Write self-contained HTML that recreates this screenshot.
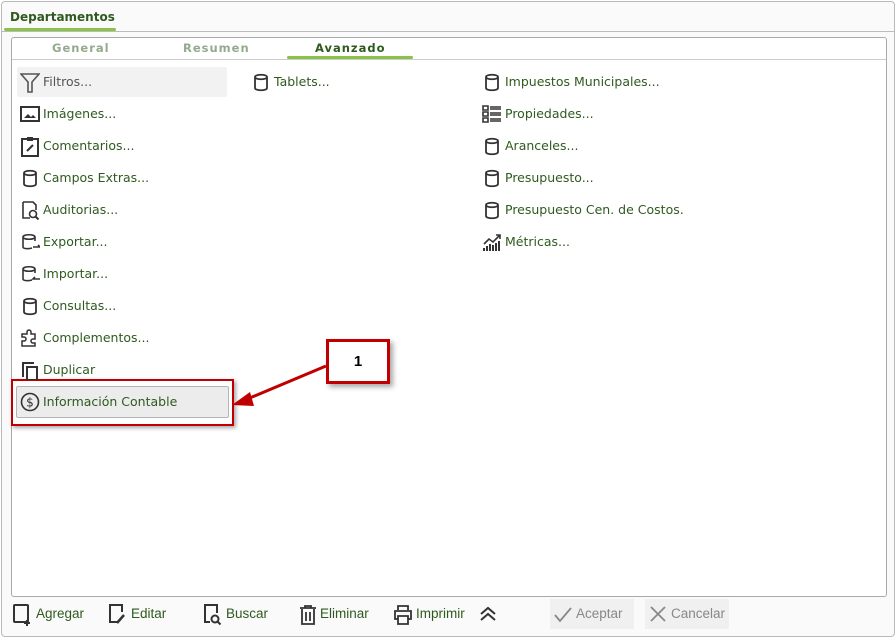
<!DOCTYPE html><html><head><style>
body{margin:0;width:896px;height:638px;background:#fff;font-family:"DejaVu Sans",Verdana,sans-serif;position:relative;overflow:hidden}
.frame{position:absolute;left:1px;top:1px;width:892px;height:634px;border:1px solid #b9b9b9;border-radius:4px;background:#fafafa}
.abs{position:absolute}
.it{position:absolute;font-size:12.5px;color:#2f5a1e;height:20px;line-height:20px;white-space:nowrap}
.it svg{position:absolute;left:-23px;top:0}
.tb{position:absolute;top:604px;font-family:"Liberation Sans Narrow","Liberation Sans",sans-serif;font-size:13.5px;color:#2f5a1e;line-height:20px}
</style></head><body>
<div class="frame"></div>
<div class="abs" style="left:10px;top:10px;font-size:12px;font-weight:bold;color:#2f5a1e">Departamentos</div>
<div class="abs" style="left:4px;top:28px;width:112px;height:3px;background:#8bc34a;border-radius:2px"></div>
<div class="abs" style="left:2px;top:31px;width:892px;height:1px;background:#bbb"></div>
<div class="abs" style="left:11px;top:37px;width:874px;height:558px;border:1px solid #aaa;border-radius:3px;background:#fff"></div>
<div class="abs" style="left:52px;top:41px;font-size:11.5px;font-weight:bold;color:#93ab8c;letter-spacing:1px">General</div>
<div class="abs" style="left:183px;top:41px;font-size:11.5px;font-weight:bold;color:#93ab8c;letter-spacing:1px">Resumen</div>
<div class="abs" style="left:315px;top:41px;font-size:11.5px;font-weight:bold;color:#2f5a1e;letter-spacing:1px">Avanzado</div>
<div class="abs" style="left:287px;top:56px;width:126px;height:3px;background:#8bc34a;border-radius:2px"></div>
<div class="abs" style="left:12px;top:59px;width:874px;height:1px;background:#ccc"></div>
<div class="abs" style="left:17px;top:67px;width:210px;height:30px;background:#f2f2f2;border-radius:2px"></div>
<div class="abs" style="left:16px;top:386px;width:211px;height:30px;background:#ececec;border:1px solid #b5b5b5;border-radius:2px"></div>
<div class="abs" style="left:11px;top:379px;width:219px;height:43px;border:2px solid #c00000;box-shadow:2px 2px 4px rgba(0,0,0,.35)"></div>
<div class="abs" style="left:326px;top:339px;width:58px;height:39px;border:3px solid #c00000;background:#fff;box-shadow:3px 3px 5px rgba(0,0,0,.35);font:bold 15px 'Liberation Sans',sans-serif;text-align:center;line-height:40px">1</div>
<svg class="abs" style="left:0;top:0" width="896" height="638"><line x1="326" y1="366" x2="245" y2="400" stroke="#c00000" stroke-width="3"/><polygon points="232,405 250,392 254,406" fill="#c00000"/></svg>
<div class="it" style="left:43px;top:72px;color:#555"><svg width="20" height="22" viewBox="0 0 20 22"><path d="M1 2h18l-7 8v10h-4V10z" fill="none" stroke="#555" stroke-width="1.6"/></svg>Filtros...</div>
<div class="it" style="left:43px;top:104px"><svg width="20" height="20"><rect x="1" y="3" width="18" height="14" fill="none" stroke="#333" stroke-width="2"/><path d="M4 14l4-4 3 3 2-2 3 3z" fill="#333"/></svg>Imágenes...</div>
<div class="it" style="left:43px;top:136px"><svg width="20" height="22"><rect x="2" y="3" width="16" height="17" fill="none" stroke="#333" stroke-width="2"/><rect x="7" y="1" width="6" height="4" fill="#333"/><path d="M7 15l6-6" stroke="#333" stroke-width="2"/></svg>Comentarios...</div>
<div class="it" style="left:43px;top:168px"><svg width="20" height="20"><path d="M4 5v11c0 3 12 3 12 0V5c0-3-12-3-12 0c0 3 12 3 12 0" fill="none" stroke="#333" stroke-width="1.8"/></svg>Campos Extras...</div>
<div class="it" style="left:43px;top:200px"><svg width="20" height="20"><path d="M3 2h10l3 3v5M3 2v16h7" fill="none" stroke="#333" stroke-width="1.6"/><circle cx="13" cy="14" r="3.5" fill="none" stroke="#333" stroke-width="1.6"/><path d="M15.5 16.5l3 3" stroke="#333" stroke-width="2"/></svg>Auditorias...</div>
<div class="it" style="left:43px;top:232px"><svg width="20" height="20"><path d="M12 16c-3 1-9 1-9-1V5c0-3 12-3 12 0v4M3 5c0 3 12 3 12 0M13 15h7l-2-2" fill="none" stroke="#333" stroke-width="1.6"/></svg>Exportar...</div>
<div class="it" style="left:43px;top:264px"><svg width="20" height="20"><path d="M12 16c-3 1-9 1-9-1V5c0-3 12-3 12 0v4M3 5c0 3 12 3 12 0M20 15h-7l2-2" fill="none" stroke="#333" stroke-width="1.6"/></svg>Importar...</div>
<div class="it" style="left:43px;top:296px"><svg width="20" height="20"><path d="M4 5v11c0 3 12 3 12 0V5c0-3-12-3-12 0c0 3 12 3 12 0" fill="none" stroke="#333" stroke-width="1.8"/></svg>Consultas...</div>
<div class="it" style="left:43px;top:328px"><svg width="20" height="20"><path d="M2 18v-5h2a2 2 0 000-4H2V6h5V4a2 2 0 014 0v2h4v5h-2a2 2 0 000 4h2v3z" fill="none" stroke="#333" stroke-width="1.5"/></svg>Complementos...</div>
<div class="it" style="left:43px;top:360px"><svg width="20" height="20"><path d="M3 17V3h11" fill="none" stroke="#333" stroke-width="2"/><rect x="7" y="7" width="10" height="13" fill="none" stroke="#333" stroke-width="2"/></svg>Duplicar</div>
<div class="it" style="left:43px;top:392px"><svg width="20" height="20"><circle cx="10" cy="10" r="8.5" fill="none" stroke="#333" stroke-width="1.6"/><text x="10" y="14.5" font-size="12" text-anchor="middle" fill="#333" font-family="DejaVu Sans">$</text></svg>Información Contable</div>
<div class="it" style="left:274px;top:72px"><svg width="20" height="20"><path d="M4 5v11c0 3 12 3 12 0V5c0-3-12-3-12 0c0 3 12 3 12 0" fill="none" stroke="#333" stroke-width="1.8"/></svg>Tablets...</div>
<div class="it" style="left:505px;top:72px"><svg width="20" height="20"><path d="M4 5v11c0 3 12 3 12 0V5c0-3-12-3-12 0c0 3 12 3 12 0" fill="none" stroke="#333" stroke-width="1.8"/></svg>Impuestos Municipales...</div>
<div class="it" style="left:505px;top:104px"><svg width="20" height="20"><path d="M1 2h5v4H1zM8 3h11M8 5h11M1 8h5v4H1zM8 9h11M8 11h11M1 14h5v4H1zM8 15h11M8 17h11" fill="none" stroke="#333" stroke-width="1.6"/></svg>Propiedades...</div>
<div class="it" style="left:505px;top:136px"><svg width="20" height="20"><path d="M4 5v11c0 3 12 3 12 0V5c0-3-12-3-12 0c0 3 12 3 12 0" fill="none" stroke="#333" stroke-width="1.8"/></svg>Aranceles...</div>
<div class="it" style="left:505px;top:168px"><svg width="20" height="20"><path d="M4 5v11c0 3 12 3 12 0V5c0-3-12-3-12 0c0 3 12 3 12 0" fill="none" stroke="#333" stroke-width="1.8"/></svg>Presupuesto...</div>
<div class="it" style="left:505px;top:200px"><svg width="20" height="20"><path d="M4 5v11c0 3 12 3 12 0V5c0-3-12-3-12 0c0 3 12 3 12 0" fill="none" stroke="#333" stroke-width="1.8"/></svg>Presupuesto Cen. de Costos.</div>
<div class="it" style="left:505px;top:232px"><svg width="20" height="20"><path d="M2 19v-3M5 19v-5M8 19v-7M11 19v-6M14 19v-8M17 19v-10" stroke="#333" stroke-width="2"/><path d="M2 12l5-5 4 3 7-7M14 3h4v4" fill="none" stroke="#333" stroke-width="1.6"/></svg>Métricas...</div>
<svg class="abs" style="left:12px;top:603px" width="22" height="24"><rect x="2" y="2" width="14" height="17" rx="1" fill="none" stroke="#333" stroke-width="2"/><path d="M15 17v6M12 20h6" stroke="#333" stroke-width="2"/></svg>
<div class="tb" style="left:36px">Agregar</div>
<svg class="abs" style="left:107px;top:603px" width="22" height="24"><path d="M10 19H3V2h12v7" fill="none" stroke="#333" stroke-width="2"/><path d="M10 20l7-8" stroke="#333" stroke-width="2.5"/></svg>
<div class="tb" style="left:131px">Editar</div>
<svg class="abs" style="left:202px;top:603px" width="22" height="24"><path d="M8 19H3V2h12v8" fill="none" stroke="#333" stroke-width="2"/><circle cx="13" cy="16" r="3.5" fill="none" stroke="#333" stroke-width="2"/><path d="M15.5 18.5l3 3" stroke="#333" stroke-width="2"/></svg>
<div class="tb" style="left:226px">Buscar</div>
<svg class="abs" style="left:297px;top:603px" width="22" height="24"><path d="M3 5h16M8 5V3h6v2M5 6v15h12V6M9 9v9M13 9v9" fill="none" stroke="#333" stroke-width="1.8"/></svg>
<div class="tb" style="left:320px">Eliminar</div>
<svg class="abs" style="left:392px;top:603px" width="22" height="24"><path d="M6 7V3h10v4M6 16H3V8h16v8h-3M6 13h10v8H6z" fill="none" stroke="#333" stroke-width="1.8"/></svg>
<div class="tb" style="left:416px">Imprimir</div>
<svg class="abs" style="left:478px;top:605px" width="20" height="18"><path d="M3 9l7-6 7 6M3 15l7-6 7 6" fill="none" stroke="#333" stroke-width="2"/></svg>
<div class="abs" style="left:550px;top:599px;width:84px;height:30px;background:#f0f0f0"></div>
<svg class="abs" style="left:553px;top:605px" width="20" height="18"><path d="M2 10l5 6L18 3" fill="none" stroke="#888" stroke-width="1.8"/></svg>
<div class="tb" style="left:576px;color:#888">Aceptar</div>
<div class="abs" style="left:645px;top:599px;width:84px;height:30px;background:#f0f0f0"></div>
<svg class="abs" style="left:648px;top:605px" width="20" height="18"><path d="M3 2l14 14M17 2L3 16" stroke="#888" stroke-width="1.8"/></svg>
<div class="tb" style="left:671px;color:#888">Cancelar</div>
</body></html>
